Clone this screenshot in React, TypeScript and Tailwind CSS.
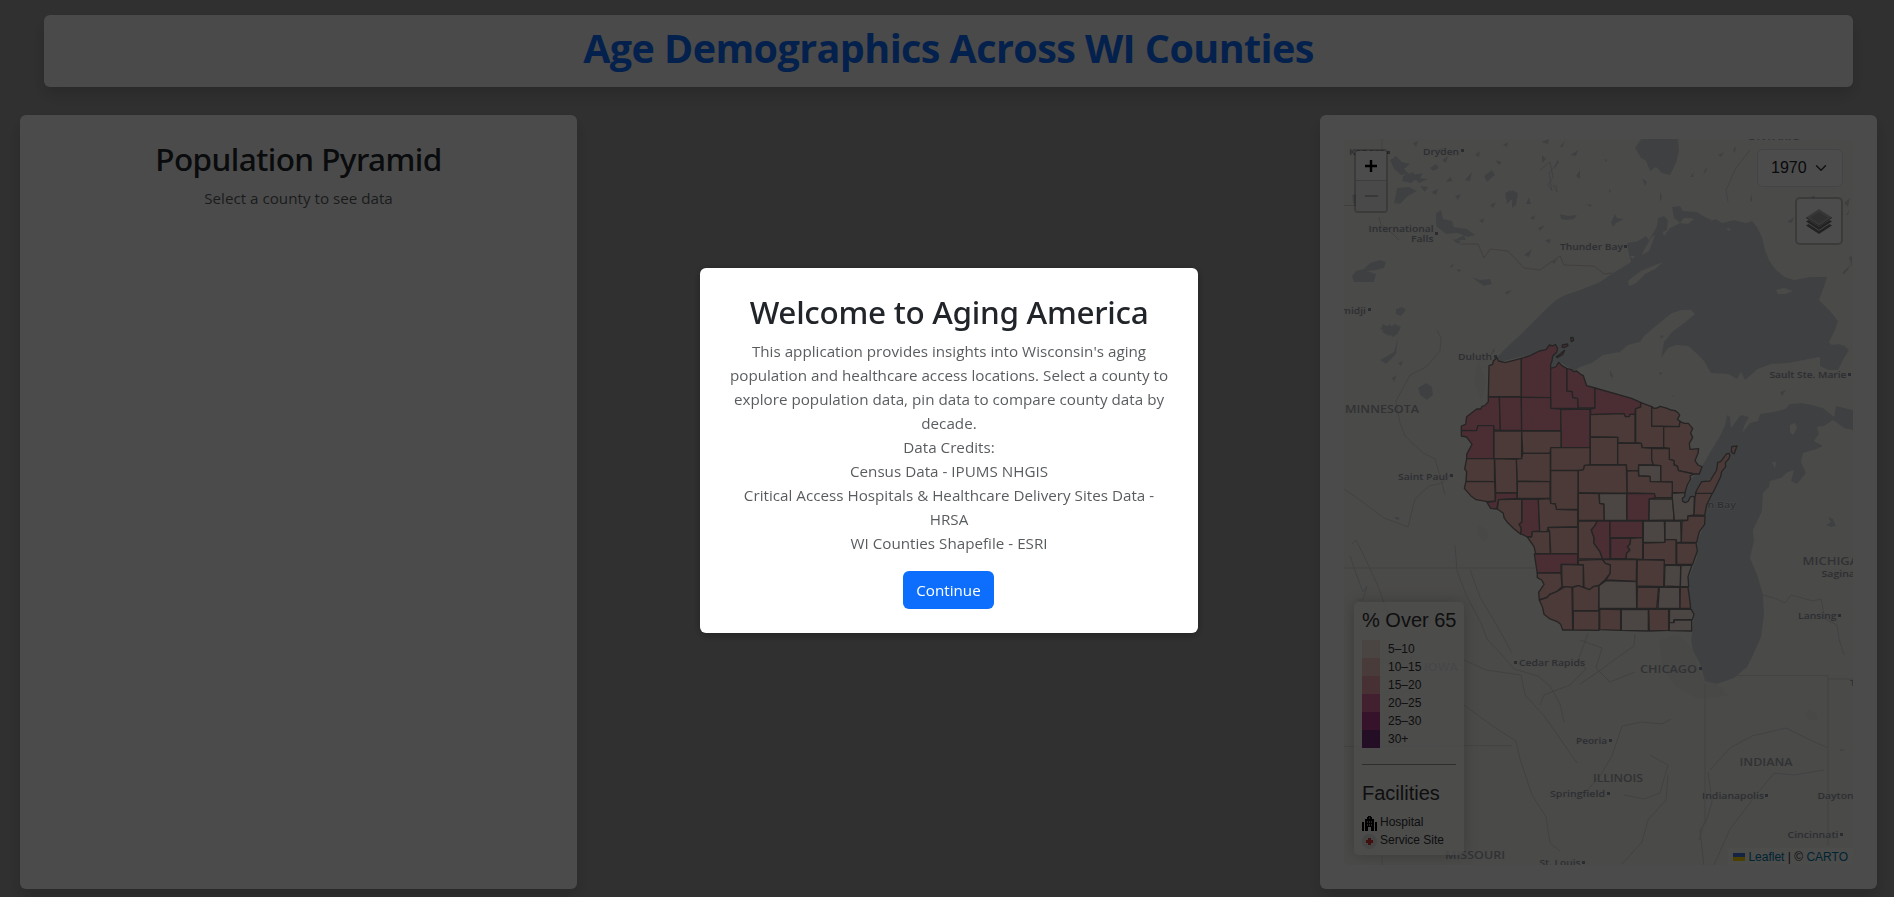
import React from "react";

const RAMP = { pale: "#fcece0", salmon: "#fac2b7", pink: "#fa97b0" };

type Tone = keyof typeof RAMP;

const COUNTIES: [string, Tone, string][] = [
  ["Douglas", "salmon", "117,92 128,88 130,78 140,68 146,78 165,83 214,70 214,185 115,185"],
  ["Bayfield", "pink", "214,70 240,62 268,48 288,44 298,30 308,33 316,28 323,40 320,52 308,64 306,78 302,88 302,188 214,187"],
  ["Ashland", "pink", "302,100 318,95 326,82 336,92 351,101 351,168 367,170 368,187 383,190 385,220 302,220"],
  ["Iron", "pink", "351,101 362,103 372,110 380,108 392,118 400,122 410,152 435,159 435,219 385,219 383,190 368,187 367,170 351,168"],
  ["Vilas", "pink", "435,159 545,190 573,203 570,220 556,224 555,238 540,238 538,245 526,245 522,236 422,239 422,222 435,219"],
  ["Burnett", "pink", "115,186 148,186 151,286 131,284 131,272 84,272 80,287 34,286 34,273 47,268 50,245 80,222 92,222 96,214 104,212 115,200"],
  ["Washburn", "pink", "148,186 214,186 215,286 151,286"],
  ["Sawyer", "pink", "214,187 302,188 302,220 332,222 333,287 215,287"],
  ["Price", "pink", "332,224 420,222 420,338 334,338"],
  ["Polk", "pink", "34,286 80,287 84,272 131,272 131,371 50,371 50,358 66,328 50,306 34,303"],
  ["Barron", "salmon", "132,288 215,288 215,371 132,371"],
  ["Rusk", "salmon", "215,288 333,288 333,338 302,340 300,355 218,355"],
  ["Oneida", "salmon", "421,239 522,236 526,245 538,245 540,238 555,238 555,323 503,324 503,307 421,306"],
  ["Forest", "salmon", "557,221 572,216 573,203 605,215 605,273 641,274 641,337 576,338 574,325 557,323"],
  ["Florence", "salmon", "605,215 612,220 622,219 630,214 652,220 662,225 675,227 685,234 689,241 682,253 690,259 688,275 605,273"],
  ["Marinette", "salmon", "641,275 688,275 690,259 702,265 715,265 728,280 722,295 728,307 718,325 720,343 746,341 744,355 735,377 744,390 756,395 748,417 732,417 685,407 682,393 672,390 672,377 658,373 658,340 641,337"],
  ["Lincoln", "salmon", "421,306 503,307 503,389 421,389"],
  ["Langlade", "salmon", "503,324 574,325 576,338 605,340 605,373 610,389 566,390 565,407 531,408 529,390 503,389"],
  ["Oconto", "salmon", "605,341 658,340 658,373 672,377 672,390 682,393 685,407 732,417 720,423 722,432 712,450 705,473 667,473 667,441 632,440 632,392 610,390 605,373"],
  ["Menominee", "pale", "566,390 632,392 632,440 601,440 600,424 566,423"],
  ["Shawano", "salmon", "531,408 565,407 566,423 600,424 601,440 667,441 667,488 615,488 613,476 531,474"],
  ["Marathon", "salmon", "403,390 529,390 531,475 385,473 385,406 400,404"],
  ["Taylor", "salmon", "302,338 420,338 420,389 403,391 400,404 385,406 302,406"],
  ["Clark", "salmon", "302,407 384,407 384,523 319,523 316,507 302,505"],
  ["Chippewa", "salmon", "218,355 301,355 301,440 201,438 199,372 215,371"],
  ["Dunn", "salmon", "134,371 199,373 202,474 137,474"],
  ["St. Croix", "salmon", "50,371 133,371 134,440 48,439 50,410 44,402"],
  ["Pierce", "salmon", "48,439 134,440 136,498 113,500 78,494 62,482 43,460"],
  ["Pepin", "pink", "137,474 201,474 201,490 146,494 140,522 122,520 111,502 136,499"],
  ["Eau Claire", "salmon", "202,440 300,440 300,490 202,490"],
  ["Buffalo", "salmon", "146,494 215,492 216,560 208,568 214,580 212,598 190,580 172,562 162,548 160,535 142,522"],
  ["Trempealeau", "pink", "216,493 265,493 269,588 247,590 245,606 232,606 212,596 214,580 208,568 216,560"],
  ["Jackson", "salmon", "265,493 300,491 302,505 316,507 319,523 383,525 383,576 296,577 292,586 299,590 269,589"],
  ["La Crosse", "salmon", "247,590 299,590 301,655 257,656 252,635 232,606 245,606"],
  ["Monroe", "salmon", "293,578 384,576 384,656 302,655 299,590"],
  ["Vernon", "pink", "253,657 383,656 383,688 333,688 333,712 262,715 258,690"],
  ["Wood", "salmon", "385,474 447,476 449,505 462,507 463,556 385,556"],
  ["Portage", "pale", "448,476 530,475 530,556 463,556 462,507 449,505"],
  ["Waupaca", "pink", "531,475 613,476 616,489 598,492 596,556 531,556"],
  ["Outagamie", "pale", "598,492 669,492 672,555 597,556"],
  ["Brown", "pale", "667,490 667,475 705,473 704,485 697,490 698,499 706,503 714,499 722,485 733,484 732,540 714,543 713,555 673,556"],
  ["Kewaunee", "salmon", "738,474 787,475 770,510 764,541 732,540 735,485"],
  ["Door", "salmon", "736,475 742,462 755,440 780,438 800,405 803,382 812,380 830,356 838,355 840,362 836,372 826,383 827,395 815,410 812,425 788,475"],
  ["Washington Island", "salmon", "845,335 861,333 852,357 844,350"],
  ["Juneau", "salmon", "385,558 442,558 435,572 424,585 432,608 432,625 450,650 458,672 385,672"],
  ["Adams", "pink", "442,558 479,558 480,672 458,672 450,650 432,625 432,608 424,585 435,572"],
  ["Waushara", "pink", "480,558 578,558 578,608 480,608"],
  ["Marquette", "pink", "482,610 542,610 540,628 532,635 540,645 530,655 528,671 482,671"],
  ["Green Lake", "salmon", "542,610 578,608 578,673 528,671 530,655 540,645 532,635 540,628"],
  ["Winnebago", "pale", "580,558 643,558 645,622 580,622"],
  ["Calumet", "pale", "645,558 692,558 694,622 680,622 678,614 645,614"],
  ["Manitowoc", "salmon", "714,543 765,543 764,568 748,590 740,622 694,622 696,558 713,556"],
  ["Fond du Lac", "salmon", "580,624 645,622 645,614 678,614 678,690 642,688 642,674 580,673"],
  ["Sheboygan", "salmon", "680,624 738,624 742,648 728,688 680,688"],
  ["Columbia", "salmon", "458,674 560,674 559,739 468,735 480,715 481,690 466,685"],
  ["Dodge", "salmon", "562,674 643,676 641,755 561,753"],
  ["Washington", "pale", "645,690 692,692 691,755 643,753"],
  ["Ozaukee", "pale", "693,692 726,690 714,725 716,755 691,755"],
  ["Sauk", "salmon", "385,676 456,673 466,685 481,690 480,715 465,735 445,752 430,755 418,764 402,758 400,690 385,688"],
  ["Richland", "salmon", "335,688 400,690 400,757 385,752 365,757 336,755"],
  ["Crawford", "salmon", "262,714 333,714 336,755 320,770 300,778 290,788 268,795 266,772 282,748 275,735 262,728"],
  ["Grant", "salmon", "268,795 290,788 300,778 320,770 345,755 366,757 368,885 338,885 332,868 322,860 300,852 282,838 278,818"],
  ["Iowa", "salmon", "368,757 385,752 402,758 418,764 430,755 447,752 446,827 369,827"],
  ["Lafayette", "salmon", "370,828 447,828 447,886 370,885"],
  ["Dane", "pale", "447,752 468,737 559,740 560,820 447,820"],
  ["Green", "salmon", "449,822 512,824 512,886 449,884"],
  ["Rock", "pale", "514,823 595,824 595,888 514,886"],
  ["Jefferson", "salmon", "562,756 626,757 620,820 561,820"],
  ["Waukesha", "pale", "628,757 689,757 690,820 624,820"],
  ["Milwaukee", "salmon", "691,757 714,757 720,800 722,820 690,820"],
  ["Walworth", "salmon", "596,823 656,823 656,886 598,888"],
  ["Racine", "pale", "659,823 724,823 732,838 727,854 672,854 670,863 658,863"],
  ["Kenosha", "pale", "658,863 672,863 674,855 725,855 725,888 658,887"],
];

const ISLANDS = ["337,30 352,27 354,32 342,38 336,36", "319,65 330,57 344,46 338,58 322,68", "362,8 369,7 371,16 364,20"];

const SMALL_LAKES =
  "M1390 160l6-4 6 6 8 2-6 5 5 5-8 1-7-6zM1403 176l10-4 4 6-6 5-9-2zM1413 143l5-2-2 6zM1397 188l12-1 8 4-9 5-8 8-6-1 2-9zM1436 213l5-3 2 9 9 2 2 6 13 2 8 6-7 2-11-4-11 1-10-8zM1452 239l9 2-3 3zM1455 240l9-5 2 5zM1412 175l11-2-3 5 8 1-9 4zM1465 180l7-8-2 9zM1484 176l8-6 3 5-8 7zM1505 193l6-3 3 7-7 7zM1512 190l6 3-2 12-4 3zM1560 214l8 2 9-1-3 4-8 1-5-1zM1530 218l5-3-1 5zM1545 240l6-1-2 5zM1479 221l5-3-1 5zM1450 266l4-2-2 4zM1457 269l5 1-4 2zM1472 277l8 3 10-1 2 5-8 2-6-4zM1505 292l7-2-5 5zM1524 255l8-6-3 8zM1382 324l8 3 9 0-2 7-4 3-6-5-4 1zM1396 309l6-2 4 3-5 6-5-2zM1382 332l8-8 3 7-4 5zM1538 228l7-3-5 6zM1418 388l8-5 6 4 1 8-6 5-7-5zM1398 363l5-2-2 5zM1392 378l5-3-3 7zM1394 517l4 0 2 2-3 1zM1490 356l4-8 1 3zM1554 170l3-10 2 2zM1570 155l8-5-2 6zM1495 160l7 2-3 3zM1503 145l5-3-1 5zM1541 142l8-3-1 5zM1560 146l5-5-3 7z" +
  "M1382 332l13-8 6 3-4 8zM1380 360l14-8 4-14-2 16-10 10zM1380 330l2-4 2 3zM1430 168l6-4 3 4-6 3zM1442 160l6-4-2 7zM1420 186l8 1-3 5zM1431 192l7-3-2 6zM1446 182l4-5 3 4zM1455 196l6-2-3 6zM1436 150l8-2-4 5zM1475 155l5-4-1 6zM1526 204l3-7 2 7zM1552 262l6-3-4 5zM1490 205l6-3-3 6zM1576 176l4-6 0 9zM1542 155l4 4-4 4z" +
  "M1635 148l6-9h37l1 12-3 12-6 12-8-2-6-6-6 4-4-10-5-3zM1642 178l5 4-2 4zM1660 190l2 8-2 4zM1604 159l3 1-1 2zM1587 204l5 1-2 2zM1609 189l2 2-2 2zM1611 222l4-8 2 4 7 1-8 4-3 4zM1658 218l6-2 4 4-1 10-4 2-6-5zM1672 207l8-1 3 5 14 1 8 5 7 3-4 3-18-5-6 0-4 5-6-5zM1690 177l4-5-1 5zM1703 175l3-8 1 3zM1718 155l6-3-3 5zM1733 150l3-4-1 7zM1750 200l2-6 0 8zM1787 222l7-5-2 6zM1811 196l4 0-1 3zM1844 203l6-5-2 9zM1846 215l4-6-2 6zM1843 275l5-5 3-8-2 4-6 6zM1849 257l3-1 0 12zM1828 517l5 2 3 7-5 1-5-2 5-3z" +
  "M1610 370l3 6-1 3 2 2-4-6zM1659 372l4 1-3 2zM1671 397l4-2-2 2zM1661 335l3 1-4 3zM1780 392l6-2-4 6zM1784 387l1 5zM1506 876l10-3-3 3zM1839 749l6 1-4 1zM1830 345l10-1 4 4-6 6zM1835 410l14 0 4 4-2 2-16-2z";

type Label = [text: string, x: number, y: number, width: number, size: number];

const CITY_LABELS: Label[] = [
  ["Kenora", 1349, 155, 36, 9.4],
  ["Dryden", 1423, 154.5, 36, 9.4],
  ["International", 1368.5, 231.5, 65, 9.4],
  ["Falls", 1411, 241.7, 22.5, 9.4],
  ["Thunder Bay", 1560, 250, 63, 9.4],
  ["midji", 1341, 314, 25, 9.4],
  ["Duluth", 1458, 360, 34, 9.4],
  ["Saint Paul", 1398, 479.7, 50, 9.4],
  ["Sault Ste. Marie", 1769.5, 377.5, 77, 9.4],
  ["Green Bay", 1683, 507.7, 53, 9.4],
  ["Saginaw", 1821.5, 576.7, 42, 9.4],
  ["Lansing", 1798, 619.3, 38.5, 9.4],
  ["Cedar Rapids", 1519, 665.7, 66, 9.4],
  ["Peoria", 1576, 743.5, 31, 9.4],
  ["Springfield", 1550, 797, 55, 9.4],
  ["Indianapolis", 1702, 798.7, 62, 9.4],
  ["Dayton", 1817.5, 799.3, 36, 9.4],
  ["Cincinnati", 1787.5, 838, 51, 9.4],
  ["St. Louis", 1539.5, 866, 41, 9.4],
];

const STATE_LABELS: Label[] = [
  ["ONTARIO", 1747, 139.6, 54, 11],
  ["MINNESOTA", 1345, 413, 74, 11],
  ["MICHIGAN", 1802.5, 565, 66, 11],
  ["CHICAGO", 1640, 673, 57, 11],
  ["IOWA", 1424, 671, 34, 11],
  ["ILLINOIS", 1593, 781.5, 50, 11],
  ["INDIANA", 1739.5, 766, 53, 11],
  ["MISSOURI", 1445, 859, 60, 11],
  ["Toledo", 1850, 686, 30, 9.4],
];

const CITY_DOTS = [
  [1387, 152], [1461, 150], [1435, 233], [1624, 246], [1368, 309], [1494, 356], [1450, 475], [1848, 374],
  [1838, 615], [1699, 668], [1514, 662], [1609, 740], [1607, 793], [1765, 795], [1840, 834], [1582, 862],
];

function BaseMap() {
  return (
    <svg className="block h-full w-full" viewBox="1344 139 509 726" preserveAspectRatio="none">
      <rect x="1344" y="139" width="509" height="726" fill="#f8f7f2" />
      <g fill="#f1f1ee">
        <path d="M1660 640l18-6 14 14 10 28 20 12 6 8-30 3-22-12-14-20z" />
        <path d="M1478 525l8 4 3 8-6 4-6-6zM1808 710l8 3 2 6-9 1-4-5zM1478 360l8 20-4 22-8-20z" />
      </g>
      <g fill="#d3d8db">
        <path d="M1497 357L1507 347 1520 335 1534 321 1547 308 1556 300 1565 295 1580 290 1600 282 1613 273 1623 267 1631 262 1628 250 1627 243 1638 241 1646 236 1649 240 1656 228 1659 220 1664 236 1670 228 1680 223 1688 224 1694 219 1708 222 1716 219 1722 223 1734 220 1746 223 1752 221 1757 227 1762 237 1765 250 1769 260 1776 270 1785 277 1794 280 1810 277 1827 277 1825 284 1819 300 1830 311 1838 321 1835 330 1829 342 1834 348 1844 345 1849 350 1843 360 1838 370 1828 370 1820 366 1820 357 1809 359 1788 363 1771 364 1758 369 1745 380 1741 372 1737 379 1728 374 1711 373 1704 361 1695 352 1688 346 1676 345 1668 348 1661 358 1664 342 1672 332 1684 323 1695 314 1691 310 1682 310 1672 313 1662 321 1644 336 1640 342 1628 345 1620 352 1603 355 1592 363 1580 367 1574 371 1560 362 1551 368 1552 350 1540 352 1500 362Z" />
        <path d="M1702 466L1711 451 1720 436 1725 425 1727 415 1730 417 1731 428 1739 417 1742 415 1749 417 1745 424 1742 433 1750 423 1758 421 1760 414 1773 412 1785 409 1790 404 1802 403 1812 405 1823 408 1834 417 1836 406 1853 410 1853 430 1844 428 1833 420 1824 426 1817 427 1819 434 1814 441 1823 446 1814 450 1803 453 1801 462 1806 473 1797 484 1791 481 1794 470 1788 472 1781 478 1770 481 1769 487 1763 493 1762 511 1753 530 1754 541 1750 558 1758 577 1763 595 1764 615 1761 637 1753 655 1747 667 1734 678 1717 684 1705 681 1700 664 1693 651 1691 640 1692 632 1694 616 1690 609 1687 594 1688 580 1697 557 1696 545 1704 525 1706 508 1713 492 1725 462 1730 457 1725 459 1716 476 1706 481 1697 491 1689 502 1683 503 1683 498 1692 478Z" />
        <path d="M1364 269l6-6 10-3 6 2-2 6-7 2-10 1 9 3-2 8h-20l-2-6 4-5zM1352 195l8-2 4 8-6 6-5-4z" />
        <path d={SMALL_LAKES} />
      </g>
      <g fill="#f8f7f2">
        <path d="M1628 281l5-4 8-6 12-5 10-4-8 7-10 5-9 9-7 3zM1776 290l8-2 9 3-8 3-7 0zM1726 229l4-1 0 3zM1643 252l8-14 4-3-6 16-7 4zM1790 425l5-2 2 5-4 7-3-3zM1772 462l4 0-1 6zM1630 256l5 0-2 3z" />
      </g>
      <g fill="none" stroke="#d3d8db" strokeWidth="0.9">
        <path d="M1540 170l10-8 3 15-5 8 4 6-3-18 8-10M1553 185l4 7-1-7M1750 150l-14 18-10 22 2 12M1437 330l4 8-1 13-14 16-16 8-14 26 4 22 5 13 18 17 12 6 6 20 4 16M1344 489l16 11 24 18 24 9 7-28 14-13 13-3 8-8M1352 544l4-4 10 20 12 26 14 40M1350 556l7 20 6 16 4-6-4 14-5 0M1455 545l2 26 10 26 14 26 6 16 15 16 12 14 24 7 12 10 10 18 4 18M1470 570l10 27 20 34 12 22M1464 660l22 10 35 5 4 20 20 22 14 20 18 26M1464 705l30 22 22 14 4 18 12 36 14 22 4 26 10 8M1540 705l4-10 10-4 16-6 16-16-8-8 10-28M1580 640l22 8-6 20 14 14 25-10M1580 684l18-12 16-12 20-14 1-12M1580 798l20-22 12-20 10-30 20-4 20 2 9-5M1650 755l18 10-8 28-16 6-20-4M1668 775l-2 25-18 20-6 22-20 22M1710 770l20-22 22-12 34-8 20 10 22 10M1708 772l4 30-6 20-6 8 4 36M1824 770l-30 5-20-2-24 30-20 26-16 36M1763 595l14 4 8 4 6-8 22 6 8-2 4 20 12 6 2 14 5 16" />
      </g>
      <g fill="none" stroke="#dcdbd8" strokeWidth="0.9">
        <path d="M1344 568h192M1344 746.500l168-1M1382 139v10M1705 684v136l-6 20M1737 675.500h91v170M1828 679h25M1382 865v-9" />
      </g>
      <path
        d="M1344 205.500h12M1379 217l2 8 6 3 12 12M1460 244h18l6 14 6-9 18 2 16 17 16 2 14-10 6-4 4 9 30 1 10 8 8-1"
        fill="none"
        stroke="#dfcfcf"
        strokeWidth="1"
      />
      <g fontFamily="'Open Sans', sans-serif" fontWeight="600" fill="#979ca8" stroke="#f4f4f0" strokeWidth="0.8" paintOrder="stroke">
        {CITY_LABELS.map(([t, x, y, w, s]) => (
          <text key={t} x={x} y={y} fontSize={s} textLength={w} lengthAdjust="spacingAndGlyphs">
            {t}
          </text>
        ))}
      </g>
      <g fontFamily="'Open Sans', sans-serif" fontWeight="600" fill="#a3a7ae">
        {STATE_LABELS.map(([t, x, y, w, s]) => (
          <text key={t} x={x} y={y} fontSize={s} textLength={w} lengthAdjust="spacingAndGlyphs">
            {t}
          </text>
        ))}
      </g>
      <g fill="#8f94a2">
        {CITY_DOTS.map(([x, y]) => (
          <rect key={`${x}-${y}`} x={x} y={y - 1} width="3" height="3" />
        ))}
      </g>
      <g transform="translate(1450 335) scale(0.33333)" stroke="#7c7878" strokeWidth="4" strokeLinejoin="round">
        {COUNTIES.map(([name, tone, points]) => (
          <polygon key={name} points={points} fill={RAMP[tone]} />
        ))}
        {ISLANDS.map((p) => (
          <polygon key={p} points={p} fill={RAMP.pink} />
        ))}
      </g>
    </svg>
  );
}

const BINS = [
  ["5–10", "bg-[#f9e6de]"],
  ["10–15", "bg-[#f4c5c0]"],
  ["15–20", "bg-[#f0a3b3]"],
  ["20–25", "bg-[#e26d9d]"],
  ["25–30", "bg-[#b83c90]"],
  ["30+", "bg-[#7a2f80]"],
];

function Legend() {
  return (
    <div className="absolute bottom-[10px] left-[10px] h-[253px] w-[110px] rounded-[5px] bg-white/80 px-2 pt-[6px] text-[#333] shadow-[0_0_15px_rgba(0,0,0,0.2)]">
      <h4 className="text-[20px] leading-6 whitespace-nowrap">% Over 65</h4>
      <ul className="mt-2 text-[12px] leading-[18px]">
        {BINS.map(([label, swatch]) => (
          <li key={label} className="flex h-[18px] gap-2">
            <i className={`h-[18px] w-[18px] ${swatch}`} />
            <span>{label}</span>
          </li>
        ))}
      </ul>
      <hr className="mt-4 border-t border-[#999]" />
      <h4 className="mt-4 text-[20px] leading-6">Facilities</h4>
      <div className="mt-2 flex h-[18px] items-center gap-[3px] text-[12px] leading-[18px]">
        <svg className="mt-[3px] h-[15px] w-[15px]" viewBox="0 0 15 15">
          <path d="M0 6h2v9H0zM13 6h2v9h-2zM3 15V3h2V1h1V0h3v1h1v2h2v12H9v-4H6v4z" fill="#000" />
          <path d="M5 5h1v2H5zM7 5h1v2H7zM9 5h1v2H9zM5 8h1v2H5zM7 8h1v2H7zM9 8h1v2H9zM7 1h1v2H7z" fill="#888" />
        </svg>
        <span>Hospital</span>
      </div>
      <div className="flex h-[18px] items-center gap-[3px] text-[12px] leading-[18px]">
        <svg className="mt-[3px] h-[15px] w-[15px]" viewBox="0 0 15 15">
          <circle cx="7.500" cy="7.500" r="7.500" fill="#e6e6e6" />
          <path d="M6 4h3v2h2v3H9v2H6V9H4V6h2z" fill="#d9362f" />
        </svg>
        <span>Service Site</span>
      </div>
    </div>
  );
}

function MapPanel() {
  return (
    <div className="relative h-full overflow-hidden rounded-[5px] font-['Liberation_Sans',Arial,sans-serif]">
      <BaseMap />
      <div className="absolute top-[10px] left-[10px] flex w-[34px] flex-col overflow-hidden rounded-[4px] border-2 border-black/20 bg-clip-padding">
        <button className="flex h-[30px] items-center justify-center border-b border-[#ccc] bg-white">
          <svg className="h-3 w-3" viewBox="0 0 12 12">
            <path d="M6 0v12M0 6h12" stroke="#000" strokeWidth="2.400" />
          </svg>
        </button>
        <button className="flex h-[30px] items-center justify-center bg-[#f4f4f4]">
          <svg className="h-3 w-[13px]" viewBox="0 0 13 12">
            <path d="M0 6h13" stroke="#bbb" strokeWidth="2" />
          </svg>
        </button>
      </div>
      <button className="absolute top-[10px] right-[10px] flex h-[38px] w-[86px] items-center justify-between rounded-[6px] border border-[#dee2e6] bg-white pr-[15px] pl-[13px] text-[16px] text-[#212529]">
        1970
        <svg className="h-3 w-3" viewBox="0 0 16 16">
          <path d="m2 5 6 6 6-6" fill="none" stroke="#343a40" strokeWidth="2" strokeLinecap="round" strokeLinejoin="round" />
        </svg>
      </button>
      <button className="absolute top-[58px] right-[10px] flex h-12 w-12 items-center justify-center rounded-[5px] border-2 border-black/20 bg-white bg-clip-padding">
        <svg className="h-[26px] w-[26px]" viewBox="0 0 26 26">
          <path d="m0 17.500 13 8.500 13-8.500-2.500-1.600L13 22.700 2.500 15.900z" fill="#747474" />
          <path d="m0 13.500 13 8.500 13-8.500-2.500-1.600L13 18.700 2.500 11.900z" fill="#747474" />
          <path d="M0 9.500 13 1l13 8.500L13 18z" fill="#b9b9b9" />
          <path d="M4 9.500 13 4l9 5.500-9 6z" fill="#a0a0a0" />
          <path d="m0 9.500 13 8.500 13-8.500" fill="none" stroke="#747474" />
        </svg>
      </button>
      <Legend />
      <div className="absolute right-0 bottom-0 flex h-[17px] items-center gap-[3px] bg-white/80 px-[5px] text-[12px] leading-[17px] whitespace-pre text-[#333]">
        <svg className="h-2 w-3" viewBox="0 0 12 8">
          <path d="M0 0h12v4H0z" fill="#4c7be1" />
          <path d="M0 4h12v4H0z" fill="#ffd500" />
        </svg>
        <span className="pt-px">
          <a className="text-[#0078a8]">Leaflet</a> | © <a className="text-[#0078a8]">CARTO</a>
        </span>
      </div>
    </div>
  );
}

const INTRO = [
  "This application provides insights into Wisconsin's aging",
  "population and healthcare access locations. Select a county to",
  "explore population data, pin data to compare county data by",
  "decade.",
  "Data Credits:",
  "Census Data - IPUMS NHGIS",
  "Critical Access Hospitals & Healthcare Delivery Sites Data -",
  "HRSA",
  "WI Counties Shapefile - ESRI",
];

function WelcomeDialog() {
  return (
    <div className="fixed inset-0 z-10 bg-black/70">
      <section className="ml-[700px] mt-[268px] flex h-[365px] w-[498px] flex-col items-center rounded-[6px] bg-white px-6 pt-[25px] text-center shadow-[0_2px_10px_rgba(0,0,0,0.3)]">
        <h2 className="font-['Noto_Sans'] text-[31.5px] leading-[38px] font-medium tracking-[-0.3px] whitespace-nowrap text-[#212529]">
          Welcome to Aging America
        </h2>
        <div className="mt-2 text-[15.2px] leading-6 tracking-[0.01px] text-[#212529bf]">
          {INTRO.map((line) => (
            <p key={line} className="whitespace-nowrap">
              {line}
            </p>
          ))}
        </div>
        <button className="mt-4 mr-px h-[38px] w-[91px] shrink-0 rounded-[6px] bg-[#0d6efd] text-[15.2px] text-white">Continue</button>
      </section>
    </div>
  );
}

export default function App() {
  return (
    <div className="h-[897px] overflow-hidden bg-[#a5a2a2] font-['Open_Sans',sans-serif]">
      <div className="w-[1897px] pt-[15px]">
        <header className="mx-11 flex h-[72px] items-center justify-center rounded-[6px] bg-[#f8f8f8] shadow-[0_8px_16px_rgba(0,0,0,0.15)]">
          <h1 className="pb-[6px] text-[39.5px] leading-[48px] font-bold tracking-[-0.58px] whitespace-nowrap text-[#0d6efd]">
            Age Demographics Across WI Counties
          </h1>
        </header>
        <main className="mt-7 flex justify-between px-5">
          <section className="h-[774px] w-[557px] rounded-[6px] bg-[#fafafa] p-6 text-center shadow-[0_8px_16px_rgba(0,0,0,0.15)]">
            <h2 className="pt-px font-['Noto_Sans'] text-[31.5px] leading-[38px] font-medium tracking-[-0.55px] text-[#212529]">
              Population Pyramid
            </h2>
            <p className="mt-2 text-[15.2px] leading-6 text-[#212529bf]">Select a county to see data</p>
          </section>
          <section className="h-[774px] w-[557px] rounded-[6px] bg-[#fafafa] p-6 shadow-[0_8px_16px_rgba(0,0,0,0.15)]">
            <MapPanel />
          </section>
        </main>
      </div>
      <WelcomeDialog />
    </div>
  );
}
